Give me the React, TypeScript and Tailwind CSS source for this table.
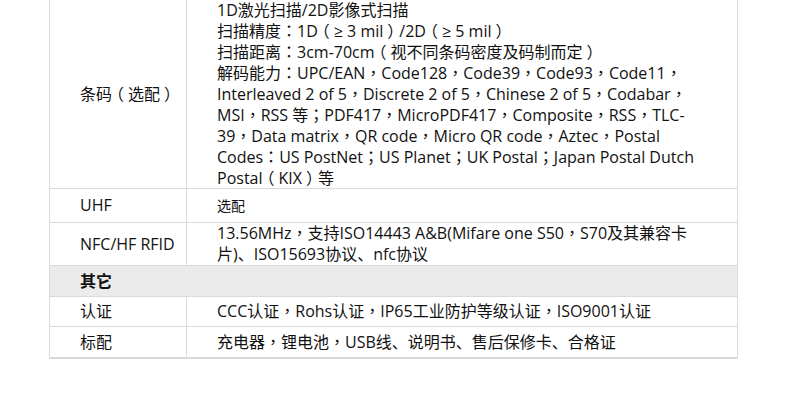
const font = { fontFamily: '"Open Sans", "Noto Sans CJK SC", sans-serif' };
const tcFont = { fontFamily: '"Open Sans", "Noto Sans CJK TC", sans-serif' };

// fullwidth punctuation is drawn centred in the reference, Noto SC puts it in the corner
function T({ text }: { text: string }) {
  const parts = text.split(/([，：；（）])/);
  return (
    <>
      {parts.map((p, i) => {
        if (p === "（" || p === "）")
          return (
            <span key={i} className="px-1 [font-feature-settings:'halt']">
              {p}
            </span>
          );
        if (p === "，" || p === "：" || p === "；")
          return (
            <span key={i} style={tcFont}>
              {p}
            </span>
          );
        return <span key={i}>{p}</span>;
      })}
    </>
  );
}

const barcodeLines = [
  "1D激光扫描/2D影像式扫描",
  "扫描精度：1D（≥ 3 mil）/2D（≥ 5 mil）",
  "扫描距离：3cm-70cm（视不同条码密度及码制而定）",
  "解码能力：UPC/EAN，Code128，Code39，Code93，Code11，",
  "Interleaved 2 of 5，Discrete 2 of 5，Chinese 2 of 5，Codabar，",
  "MSI，RSS 等；PDF417，MicroPDF417，Composite，RSS，TLC-",
  "39，Data matrix，QR code，Micro QR code，Aztec，Postal",
  "Codes：US PostNet；US Planet；UK Postal；Japan Postal Dutch",
  "Postal（KIX）等",
];

function Row({
  label,
  height,
  bold,
  gray,
  children,
}: {
  label: string;
  height: string;
  bold?: boolean;
  gray?: boolean;
  children?: React.ReactNode;
}) {
  return (
    <div className={`flex border-b border-[#dadada] ${height} ${gray ? "bg-[#ebebeb]" : ""}`}>
      <div
        className={`flex w-[137px] shrink-0 items-center pl-[30px] ${
          gray ? "" : "border-r border-[#dadada]"
        } ${bold ? "font-bold" : ""}`}
      >
        <div className="whitespace-nowrap">
          <T text={label} />
        </div>
      </div>
      <div className="flex flex-1 flex-col justify-center pl-[30px]">{children}</div>
    </div>
  );
}

export default function App() {
  return (
    <div className="h-[415px] w-[790px] overflow-hidden bg-white text-[16px] leading-[21px] text-[#111]" style={font}>
      <div className="ml-[49px] w-[689px] border-x border-b border-[#dadada]">
        <Row label="条码（选配）" height="h-[189px]">
          {barcodeLines.map((line) => (
            <div key={line} className="whitespace-nowrap">
              <T text={line} />
            </div>
          ))}
        </Row>
        <Row label="UHF" height="h-[34px]">
          <div className="text-[14px]">选配</div>
        </Row>
        <Row label="NFC/HF RFID" height="h-[43px]">
          <div className="whitespace-nowrap">
            <T text="13.56MHz，支持ISO14443 A&B(Mifare one S50，S70及其兼容卡" />
          </div>
          <div className="whitespace-nowrap">片)、ISO15693协议、nfc协议</div>
        </Row>
        <Row label="其它" height="h-[31px]" bold gray />
        <Row label="认证" height="h-[30px]">
          <div className="whitespace-nowrap">
            <T text="CCC认证，Rohs认证，IP65工业防护等级认证，ISO9001认证" />
          </div>
        </Row>
        <Row label="标配" height="h-[31px]">
          <div className="whitespace-nowrap">
            <T text="充电器，锂电池，USB线、说明书、售后保修卡、合格证" />
          </div>
        </Row>
      </div>
    </div>
  );
}
